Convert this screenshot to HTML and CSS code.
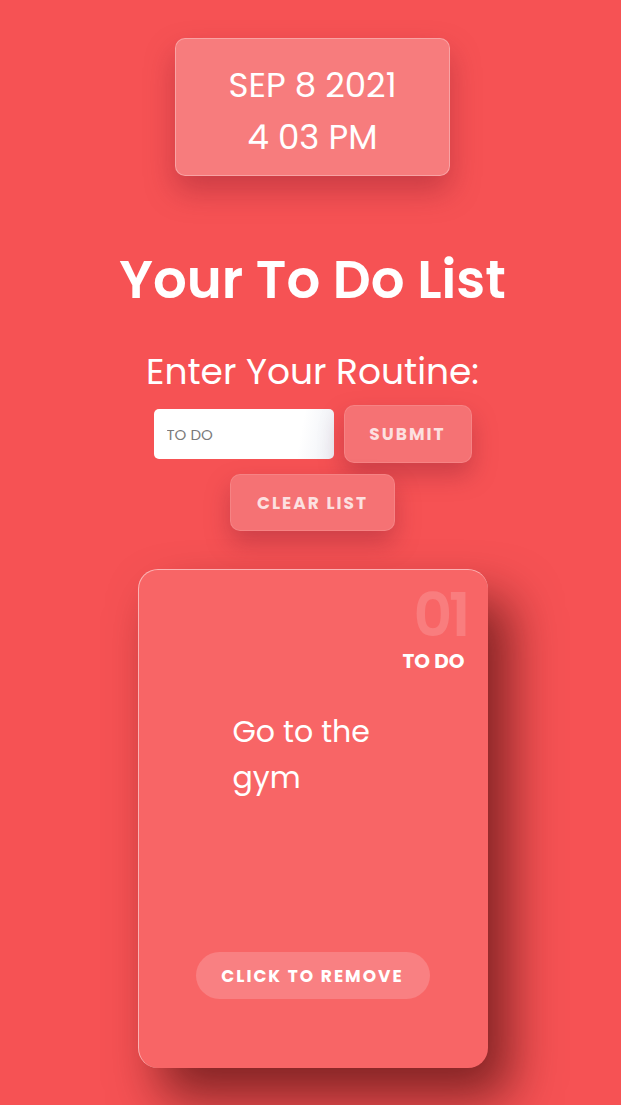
FILE: index.html
```html
<!DOCTYPE html>
<html>
<head>
<meta charset="utf-8">
<link rel="stylesheet" href="styles.css">
</head>
<body>
<main class="page">
  <div class="clock">
    <div class="clock-line">SEP 8 2021</div>
    <div class="clock-line">4 03 PM</div>
  </div>
  <h1 class="title">Your To Do List</h1>
  <h2 class="subtitle">Enter Your Routine:</h2>
  <div class="form-row">
    <input class="todo-input" type="text" placeholder="TO DO">
    <button class="btn btn-submit">SUBMIT</button>
  </div>
  <button class="btn btn-clear">CLEAR LIST</button>
  <div class="card">
    <div class="card-head">
      <div class="card-num">01</div>
      <div class="card-label">TO DO</div>
    </div>
    <p class="card-text">Go to the gym</p>
    <button class="btn-remove">CLICK TO REMOVE</button>
  </div>
</main>
</body>
</html>
```
FILE: styles.css
```css
html, body {
  margin: 0;
  padding: 0;
}
body {
  background: #f65254;
  font-family: "Poppins", "Inter", "Open Sans", sans-serif;
  color: #fff;
  height: 1105px;
  overflow: hidden;
}
.page {
  display: flex;
  flex-direction: column;
  align-items: center;
  padding-left: 4px;
}
.clock {
  margin-top: 38px;
  width: 275px;
  height: 138px;
  box-sizing: border-box;
  padding-top: 8px;
  background: #f77c7d;
  border: 1px solid rgba(255,255,255,0.3);
  border-radius: 10px;
  box-shadow: 0 15px 30px rgba(120,20,40,0.35);
  display: flex;
  flex-direction: column;
  align-items: center;
  justify-content: center;
  font-size: 34px;
  line-height: 52px;
  font-weight: 400;
}
.title {
  margin: 72px 0 0;
  font-size: 53px;
  font-weight: 600;
  line-height: 64px;
}
.subtitle {
  margin: 36px 0 0;
  font-size: 36px;
  font-weight: 400;
  line-height: 48px;
}
.form-row {
  margin-top: 9px;
  display: flex;
  align-items: center;
  gap: 10px;
}
.todo-input {
  width: 180px;
  height: 50px;
  box-sizing: border-box;
  border: none;
  border-radius: 5px;
  padding: 0 13px;
  font-family: inherit;
  font-size: 15px;
  background: linear-gradient(100deg, #fff 80%, #eef0f6);
  outline: none;
}
.todo-input::placeholder {
  color: #7a7a7a;
}
.btn {
  font-family: inherit;
  font-weight: 700;
  font-size: 17px;
  letter-spacing: 2px;
  color: rgba(255,255,255,0.78);
  background: #f57274;
  border: 1px solid rgba(255,255,255,0.12);
  border-radius: 10px;
  box-shadow: 0 12px 25px rgba(130,30,50,0.35);
  cursor: pointer;
}
.btn-submit {
  width: 128px;
  height: 58px;
}
.btn-clear {
  margin-top: 11px;
  width: 165px;
  height: 57px;
}
.card {
  margin-top: 38px;
  width: 350px;
  height: 499px;
  box-sizing: border-box;
  background: #f86566;
  border-radius: 20px;
  border-left: 1px solid rgba(255,255,255,0.5);
  border-top: 1px solid rgba(255,255,255,0.5);
  box-shadow: 22px 30px 50px rgba(80,15,15,0.7);
  display: flex;
  flex-direction: column;
  padding: 14px 23px 69px 94px;
}
.card-head {
  display: flex;
  flex-direction: column;
  align-items: flex-end;
}
.card-num {
  font-size: 60px;
  line-height: 62px;
  font-weight: 600;
  letter-spacing: -3.5px;
  margin-right: -2.5px;
  color: rgba(255,255,255,0.16);
}
.card-label {
  margin-top: 3px;
  font-size: 20px;
  font-weight: 700;
  line-height: 24px;
}
.card-text {
  margin: 36px 0 0;
  width: 175px;
  font-size: 30px;
  line-height: 46px;
  flex: 1;
}
.btn-remove {
  align-self: flex-start;
  margin-left: -37px;
  width: 234px;
  height: 47px;
  border-radius: 24px;
  border: none;
  background: #f98082;
  color: #fff;
  font-family: inherit;
  font-weight: 700;
  font-size: 17px;
  letter-spacing: 2px;
  cursor: pointer;
}
```
